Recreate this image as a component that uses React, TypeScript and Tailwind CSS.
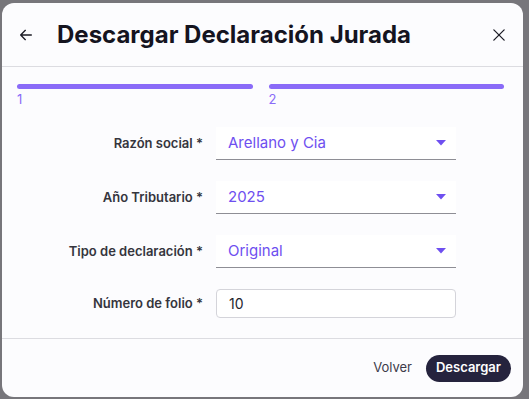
import React from 'react';

const font = { fontFamily: 'Inter, "Noto Sans", sans-serif' };

const SelectField: React.FC<{ value: string }> = ({ value }) => (
  <div className="w-[240px] h-[33px] bg-white border-b border-[#8e8e95] flex items-center justify-between pl-[12px] pr-[10px]">
    <span className="text-[15px] text-[#6e4ff0]">{value}</span>
    <svg width="10" height="6" viewBox="0 0 10 6">
      <path d="M0 0h10L5 5.5z" fill="#6e4ff0" />
    </svg>
  </div>
);

const Row: React.FC<{ label: string; children: React.ReactNode }> = ({ label, children }) => (
  <div className="flex items-center">
    <label className="w-[214px] text-right pr-[13px] text-[13px] font-semibold text-[#35353d]">{label}</label>
    {children}
  </div>
);

const App: React.FC = () => {
  return (
    <div className="h-screen w-full bg-[#77767b] pt-[3px] pl-[2px] pr-[6px] pb-[2px] overflow-hidden" style={font}>
      <div className="h-full bg-[#fcfcfe] rounded-[12px] flex flex-col">
        {/* Header */}
        <div className="h-[64px] flex items-center pl-[16px] pr-[18px] border-b border-[#dcdce1]">
          <svg width="16" height="16" viewBox="0 0 24 24" fill="none" stroke="#1b1b25" strokeWidth="2" strokeLinecap="round" strokeLinejoin="round">
            <path d="M20 12H4M11 5l-7 7 7 7" />
          </svg>
          <h1 className="ml-[23px] text-[24px] font-bold text-[#15141f]">Descargar Declaración Jurada</h1>
          <svg className="ml-auto" width="12" height="12" viewBox="0 0 14 14" fill="none" stroke="#1b1b25" strokeWidth="1.5" strokeLinecap="round">
            <path d="M1 1l12 12M13 1L1 13" />
          </svg>
        </div>

        {/* Steps */}
        <div className="pt-[17px] pl-[15px] pr-[19px] flex gap-[16px]">
          {['1', '2'].map(n => (
            <div key={n} className="flex-1">
              <div className="h-[5px] rounded-full bg-[#8a6bf8]" />
              <div className="text-[13px] text-[#8a6bf8] mt-[2px] leading-[16px]">{n}</div>
            </div>
          ))}
        </div>

        {/* Form */}
        <div className="flex-1 pt-[20px] flex flex-col gap-[21px]">
          <Row label="Razón social *">
            <SelectField value="Arellano y Cia" />
          </Row>
          <Row label="Año Tributario *">
            <SelectField value="2025" />
          </Row>
          <Row label="Tipo de declaración *">
            <SelectField value="Original" />
          </Row>
          <Row label="Número de folio *">
            <div className="w-[240px] h-[29px] bg-white border border-[#d4d4da] rounded-[4px] flex items-center pl-[12px] text-[14px] text-[#25242e]">10</div>
          </Row>
        </div>

        {/* Footer */}
        <div className="h-[59px] border-t border-[#dcdce1] flex items-center justify-end gap-[14px] pr-[12px]">
          <button className="text-[13px] text-[#3c3b4a]">Volver</button>
          <button className="h-[27px] px-[10px] rounded-full bg-[#25233d] text-white text-[13px] font-semibold">Descargar</button>
        </div>
      </div>
    </div>
  );
};

export default App;
